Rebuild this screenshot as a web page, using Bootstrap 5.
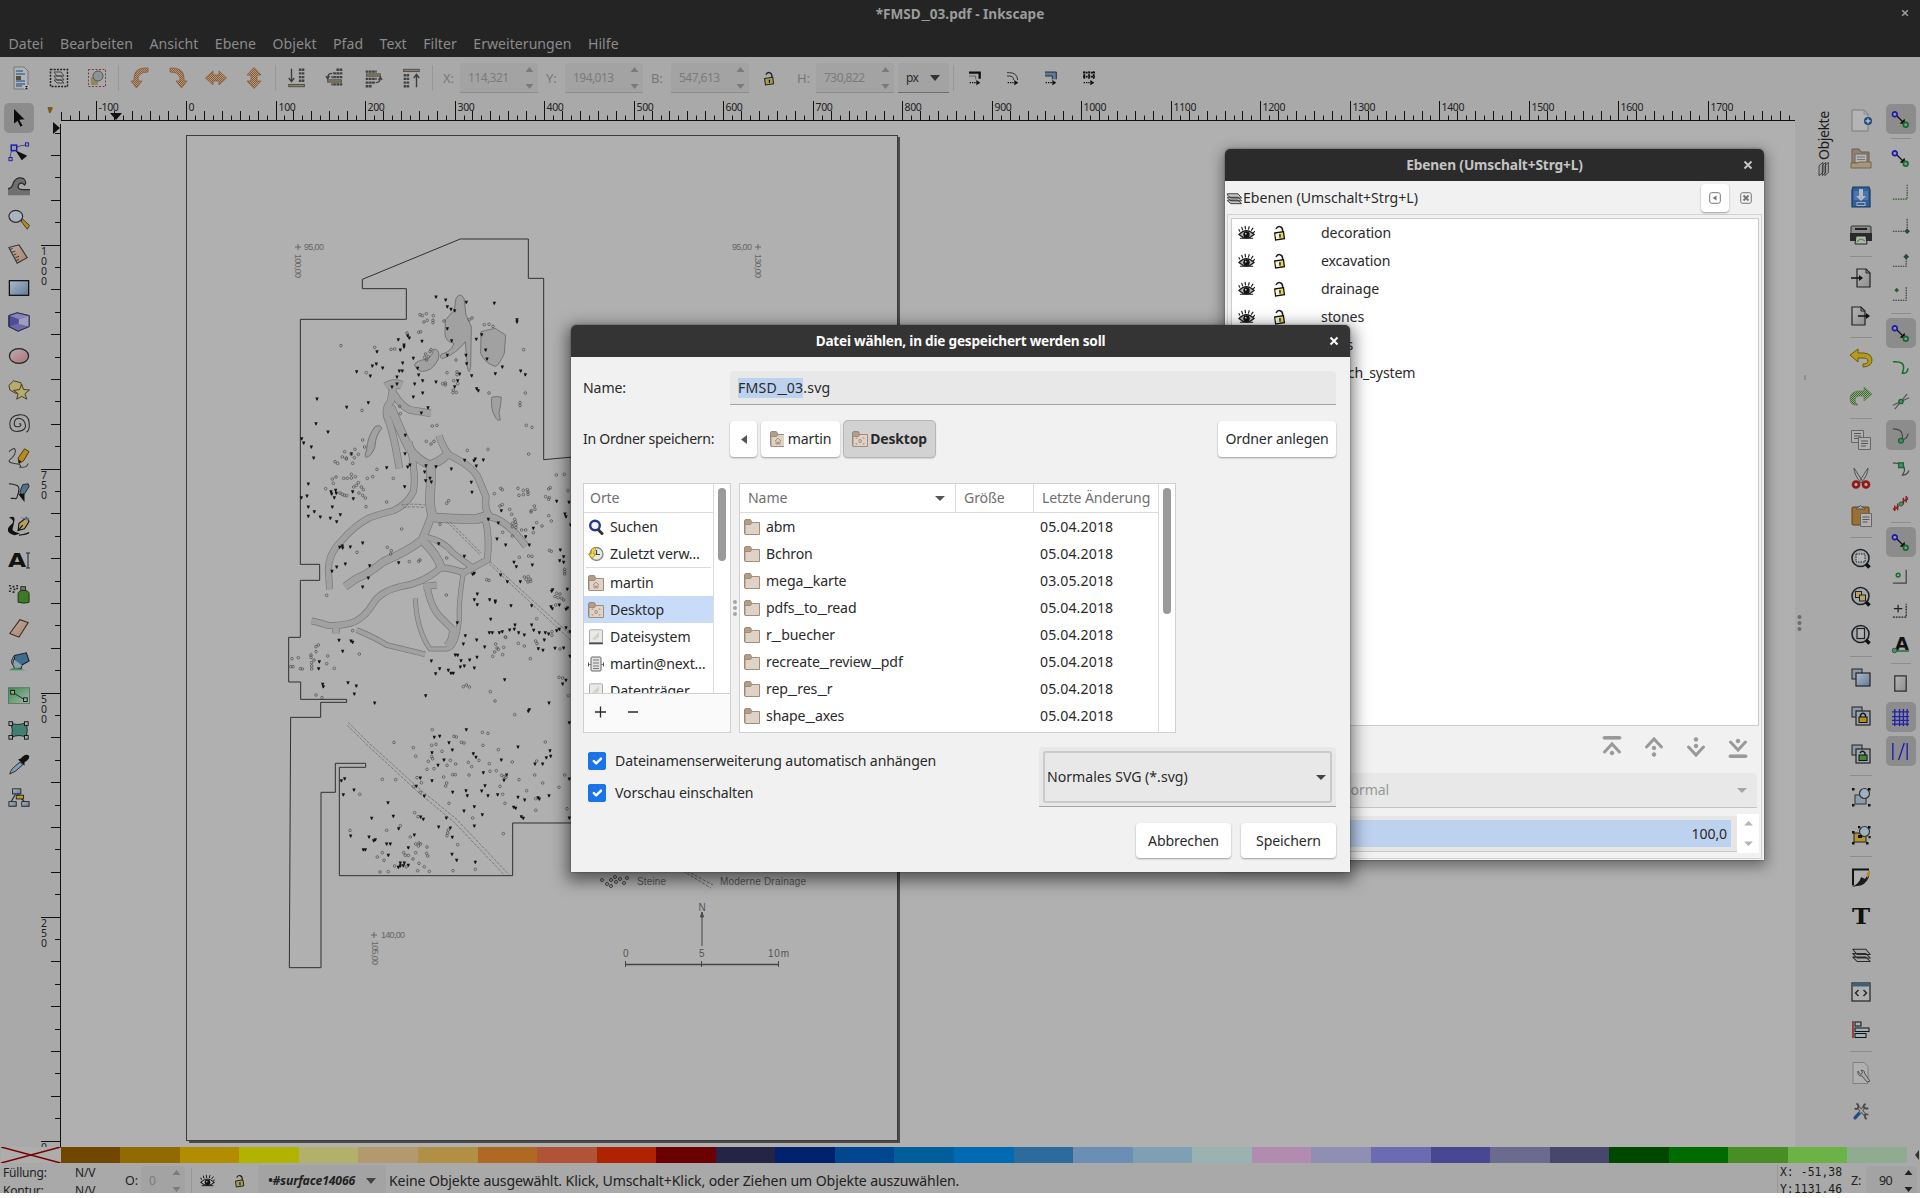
<!DOCTYPE html>
<html lang="de">
<head>
<meta charset="utf-8">
<title>*FMSD_03.pdf - Inkscape</title>
<link href="https://cdn.jsdelivr.net/npm/bootstrap@5.3.0/dist/css/bootstrap.min.css" rel="stylesheet">
<style>
body{font-family:"Noto Sans","Open Sans",sans-serif;font-size:14.1px;letter-spacing:-.12px;line-height:20px;color:#2a2a2a;width:1920px;height:1198px;overflow:hidden;background:#fff;position:relative}
.app{height:1193px;background:#a9a9a9;overflow:hidden;color:#222}
.titleb{height:28px;background:#242424;color:#9b9b9b;font-weight:700;font-size:13.6px;letter-spacing:0;position:relative}
.menub{height:29px;background:#242424;gap:16.5px;padding:0 8px 0 8.5px;letter-spacing:.02px}
.menub .nav-link{color:#8b8b8b;padding:0;line-height:31px}
.tools{height:42px;padding-left:2px}
.tools svg,.cmds svg,.snaps svg,.tbox svg{display:block;flex:none}
.cell{width:38px;display:flex;justify-content:center;flex:none}
.vsep{width:5px;height:26px;flex:none;background:linear-gradient(#979797,#979797) center/1px 100% no-repeat}
.tl{color:#777;padding-left:8px;flex:none;font-size:13px}
.spin{background:#a3a3a3;border-bottom:1px solid #8c8c8c;border-radius:4px 4px 0 0;height:30px;width:78px;padding:0 4px 0 8px;color:#7b7b7b;font-size:12px;letter-spacing:-.55px;flex:none}
.arr{width:9px;height:24px;flex:none}
.work{height:1048px;flex:none}
.tbox{width:38px;padding-top:2px}
.tbox>div,.snaps>div{height:34px;display:flex;align-items:center;justify-content:center}
.tbox .on>span,.snaps .on>span{background:#8c8c8c;border-radius:5px;width:30px;height:30px;display:flex;align-items:center;justify-content:center}
.canvas{width:1757px;height:1048px;flex:none}
.dock{width:46px;flex:none;position:relative}
.cmds{width:40px;padding-top:3px}
.cmds>div{height:38px;display:flex;align-items:center;justify-content:center}
.cmds>hr,.snaps>hr{height:1px;margin:2px auto;width:22px;border:0;background:#8d8d8d;opacity:1}
.snaps{width:39px;padding-top:3px}
.snaps>hr{width:20px}
.pal{height:16px;padding:0 13px 0 1px;flex:none}
.pal>i{flex:1 1 0}
.stat{height:30px;position:relative;flex:none}
.mono{font-family:"DejaVu Sans Mono",monospace;font-size:11.4px;letter-spacing:0}
.win{position:absolute;background:#f1f1f1;border-radius:5px 5px 0 0;box-shadow:0 4px 14px 2px rgba(0,0,0,.42),0 0 2px rgba(0,0,0,.5)}
.layers{left:1225px;top:149px;width:539px;height:711px;background:#f1f1f1}
.save{left:571px;top:325px;width:779px;height:547px;box-shadow:0 5px 16px 4px rgba(0,0,0,.5),0 0 2px rgba(0,0,0,.5)}
.wbar{height:32px;background:#2b2b2b;border-radius:5px 5px 0 0;color:#c4c4c4;font-weight:700;font-size:13.7px;position:relative}
.save .wbar{background:#343434;color:#fafafa;font-size:13.6px;letter-spacing:-.22px}
.wx{position:absolute;right:11px;top:50%;margin-top:-5px}
.gbtn{background:#fff;border:0;border-radius:4px;box-shadow:0 1px 2px rgba(0,0,0,.35);padding:0;letter-spacing:inherit;white-space:nowrap;font-size:14.1px;color:#2a2a2a;height:36px;display:flex;align-items:center;justify-content:center}
.gbtn.down{background:#d2d2d2;font-weight:700;font-size:13.9px;box-shadow:0 0 0 1px #b5b5b5,0 1px 2px rgba(0,0,0,.4)}
.frame{border:1px solid #d0d0d0;background:#fff}
.entry{background:#e8e8e8;border:0;border-bottom:1px solid #a3a3a3;border-radius:4px 4px 0 0;height:34px;line-height:20px}
.sel{background:#bdd2ef}
.us{display:inline-block;transform:scaleX(1.5);margin:0 1.7px}
.hd{color:#6f6f6f;height:29px;border-bottom:1px solid #dcdcdc}
.rw{height:27px;display:flex;align-items:center;white-space:nowrap}
.rw svg{flex:none}
.date{letter-spacing:.12px}
.lrow{height:28px;display:flex;align-items:center}
.thumbv{background:#9a9a9a;border-radius:4px;width:8px}
.chk.form-check-input{width:18px;height:18px;margin:0;border-radius:2px;background-color:#1a73e8;border-color:#1a73e8;flex:none;float:none}
.list{height:508px;margin:3px 2px 0 3px;border:1px solid #ccc;background:#fff}
.dim{opacity:.8}
</style>
<script src="https://cdn.jsdelivr.net/npm/bootstrap@5.3.0/dist/js/bootstrap.bundle.min.js"></script>
</head>
<body>
<svg width="0" height="0" class="position-absolute">
<defs>
<pattern id="chko" width="2" height="2" patternUnits="userSpaceOnUse"><rect width="2" height="2" fill="#b09a88"/><rect width="1" height="1" fill="#8a5a30"/><rect x="1" y="1" width="1" height="1" fill="#8a5a30"/></pattern>
<pattern id="chkg" width="2" height="2" patternUnits="userSpaceOnUse"><rect width="2" height="2" fill="#96a88c"/><rect width="1" height="1" fill="#3d6a2a"/><rect x="1" y="1" width="1" height="1" fill="#3d6a2a"/></pattern>
<linearGradient id="gb" x2="1" y2="1"><stop stop-color="#aebbc8"/><stop offset="1" stop-color="#5f7b98"/></linearGradient>
<linearGradient id="gk" x2="1" y2="1"><stop stop-color="#b8aeb0"/><stop offset="1" stop-color="#b07078"/></linearGradient>
<linearGradient id="go" x2="1" y2="1"><stop stop-color="#b8aca6"/><stop offset="1" stop-color="#b08066"/></linearGradient>
<linearGradient id="gw" x2="1" y2="1"><stop stop-color="#b4b4b4"/><stop offset="1" stop-color="#8f8f8f"/></linearGradient>
<linearGradient id="gg" x2="1" y2="1"><stop stop-color="#3a8a50"/><stop offset="1" stop-color="#a9b8ac"/></linearGradient>

<symbol id="s-spin" viewBox="0 0 9 24"><path d="M0.5 6 4.500 1l4 5zM.5 18l4 5 4-5z" fill="currentColor"/></symbol>
<symbol id="s-x" viewBox="0 0 10 10"><path d="M1.500 1.500l7 7M8.500 1.500l-7 7" stroke="currentColor" stroke-width="2"/></symbol>
<symbol id="s-eye" viewBox="0 0 18 18"><path d="M1 10q8-8 16 0-8 7.500-16 0z" fill="#bbb" stroke="#1c1c1c" stroke-width="1.300"/><circle cx="9" cy="10" r="3.400" fill="#111"/><circle cx="8.200" cy="9.200" r=".9" fill="#ccc"/><path d="M2 7 .8 4.500M5 5.500 3.800 2M8 4.700 7.500 1M11 5l1-3.700M14 6l2-3M16 8.500l1.800-2M2 14h14" stroke="#1c1c1c" stroke-width="1.200" fill="none"/></symbol>
<symbol id="s-unlock" viewBox="0 0 16 18"><path d="M3.500 4.500Q5 1 8 1.800T11 6v3" fill="none" stroke="#222" stroke-width="1.800"/><path d="M2 9l10-1.500 1 8L3 17z" fill="#e6d46a" stroke="#111" stroke-width="1.500"/><path d="M2.800 10l4-.6.8 6-4 .8z" fill="#f7f3d8"/><path d="M7 10.500h1.800l-.2 4H7.400z" fill="#111"/></symbol>
<symbol id="s-unlockd" viewBox="0 0 16 18"><path d="M3.500 4.500Q5 1 8 1.800T11 6v3" fill="none" stroke="#222" stroke-width="1.600"/><path d="M2 9l10-1.500 1 8L3 17z" fill="#a99c52" stroke="#222" stroke-width="1.300"/><path d="M7 10.500h1.800l-.2 4H7.400z" fill="#111"/></symbol>
<symbol id="s-layers" viewBox="0 0 24 24"><g fill="#c4c4c4" stroke="#333" stroke-width="1.300" stroke-linejoin="round"><path d="M2 16l5 4h15l-5-5H2zM2 12l5 4h15l-5-5H2zM2 8l5 4h15l-5-6H2z"/></g></symbol>
<symbol id="s-layersd" viewBox="0 0 24 24"><g fill="#a6a6a6" stroke="#2a2a2a" stroke-width="1.200" stroke-linejoin="round"><path d="M2 15l5 5h15l-5-5zM2 11l5 5h15l-5-5zM2 6l5 6h15l-5-6z"/></g></symbol>

<symbol id="t-arrow" viewBox="0 0 24 24"><path d="M6 1l13 13-6 .3 3.500 6.200-3.200 1.600-3-6.400L6 19z" fill="#0b0b0b" stroke="#a5a5a5" stroke-width=".8"/></symbol>
<symbol id="t-node" viewBox="0 0 24 24"><path d="M2 20Q1 5 22 4" fill="none" stroke="#444"/><path d="M8 10l13 6-6 5z" fill="#111"/><g fill="#9a9ab4" stroke="#1b1bb4"><rect x="1" y="18" width="3.500" height="3.500"/><rect x="19" y="2" width="3.500" height="3.500"/><rect x="3.500" y="4.500" width="6" height="6" stroke-width="1.600"/></g></symbol>
<symbol id="t-tweak" viewBox="0 0 24 24"><path d="M0 15Q5 14 6 8 10 1 17 4q4 4 1 7-3-4-6-1-3 5 3 6h9v6H0z" fill="#707070"/><path d="M0 15Q5 14 6 8 10 1 17 4q4 4 1 7-3-4-6-1-3 5 3 6h9" fill="none" stroke="#2c2c2c" stroke-width="1.400"/></symbol>
<symbol id="t-zoom" viewBox="0 0 24 24"><ellipse cx="8.500" cy="8" rx="7.500" ry="6.500" fill="#a9b4be" stroke="#2f2f2f" stroke-width="1.300"/><path d="M14 13l2.500-1.500 7 6.500-2.500 4z" fill="#b98d1c" stroke="#333"/></symbol>
<symbol id="t-ruler" viewBox="0 0 24 24"><path d="M1 5l11-3 9 14-11 6z" fill="url(#go)" stroke="#333" stroke-width="1.200"/><path d="M2 7l3-1M4 10l4-1M6 13l3-1M8 16l4-1.500M9 19l3-1" stroke="#333"/></symbol>
<symbol id="t-rect" viewBox="0 0 24 24"><rect x="1.500" y="4" width="21" height="16" fill="url(#gb)" stroke="#111" stroke-width="1.400"/></symbol>
<symbol id="t-cube" viewBox="0 0 24 24"><path d="M1 5l9-3 13 3v12l-12 5L1 17z" fill="#4e4e92" stroke="#25254f"/><path d="M1 5l9-3 13 3-11 4z" fill="#8585b4"/><path d="M12 9l11-4v12l-12 5z" fill="#9d9dbd"/><path d="M1 17l10-3 12 3-12 5z" fill="#6a6aa4"/><path d="M1 5l9-3 13 3v12l-12 5L1 17z" fill="none" stroke="#25254f"/></symbol>
<symbol id="t-ell" viewBox="0 0 24 24"><ellipse cx="12" cy="12" rx="10.500" ry="8" fill="url(#gk)" stroke="#222" stroke-width="1.300"/></symbol>
<symbol id="t-star" viewBox="0 0 24 24"><g fill="#b5ac6e" stroke="#3a3620"><path d="M1 7l5-5 8 2 1 6-6 6-7-4z"/><path d="M15 6l2 5.500 6.500.5-5 4 2 6-5.500-3-5.500 3 1.500-6-5-3.500 6.500-1z"/></g></symbol>
<symbol id="t-spiral" viewBox="0 0 24 24"><path d="M12 12q2-1 2 1t-4 2-3-5 6-4 6 7-8 7T2 12 12 2t11 8-3 11" fill="none" stroke="#2e2e2e" stroke-width="1.200"/></symbol>
<symbol id="t-pencil" viewBox="0 0 24 24"><path d="M1 5q7-6 7-1t-5 9 4 5 6 4q8 1 9-4" fill="none" stroke="#3d3d3d" stroke-width="1.200"/><path d="M12 18l-1-6 7-10 5 3-6 10z" fill="#b98a1a" stroke="#443208"/><path d="M12 18l-.5-4 3 1.500z" fill="#111"/></symbol>
<symbol id="t-pen" viewBox="0 0 24 24"><path d="M1 3q5 0 9 2t0 12q0 3-3 2H3" fill="none" stroke="#222" stroke-width="1.200"/><path d="M13 12l3-8 6-1 1 3-5 8-4 1z" fill="#54718e" stroke="#222"/><path d="M13 15l4 0 0 5z" fill="#111" stroke="#111" stroke-width="2"/></symbol>
<symbol id="t-call" viewBox="0 0 24 24"><path d="M1 3q7-3 6 3t-2 9 8 5q-6 4-11 0t1-9-2-8z" fill="#111"/><path d="M11 17l1-8 8-6 3 4-5 8z" fill="#b9a05a" stroke="#111" stroke-width="1.200"/><path d="M13 3h10v3z" fill="#536f92"/><path d="M11 17l5-6M12 22q8-1 11-3" stroke="#111" stroke-width="1.300" fill="none"/></symbol>
<symbol id="t-spray" viewBox="0 0 24 24"><path d="M11 12q0-4 6-4t6 4v9q-5 2-12 0z" fill="#3c7a26" stroke="#1c2e14"/><rect x="14" y="4" width="5" height="4" fill="#777" stroke="#222"/><path d="M1 3h2M5 4h2M9 3h2M2 6h2M6 7h2M1 9h2M5 10h2M9 6h2" stroke="#222" stroke-width="1.800"/></symbol>
<symbol id="t-eraser" viewBox="0 0 24 24"><path d="M2 18L13 3l9 3-10 16z" fill="url(#go)" stroke="#3a2a22" stroke-width="1.200"/></symbol>
<symbol id="t-bucket" viewBox="0 0 24 24"><path d="M7 5l13-3 3 9-11 6-5-2z" fill="#3f6d8e" stroke="#15242f" stroke-width="1.200"/><path d="M7 5q-5 6-2 10M6 9q-2 6 1 10h8q-2-2 1-3" fill="#8fa0ae" stroke="#222"/><path d="M1 21q5-4 11-2t11 2z" fill="#3f8f5c"/></symbol>
<symbol id="t-grad" viewBox="0 0 24 24"><rect x=".5" y="3" width="23" height="17" fill="url(#gg)" stroke="#4c7a58"/><path d="M5 8l13 8" stroke="#222"/><rect x="3" y="6" width="4" height="4" fill="#a9a9a9" stroke="#111"/><rect x="17" y="14" width="4" height="4" fill="#a9a9a9" stroke="#111"/></symbol>
<symbol id="t-mesh" viewBox="0 0 24 24"><path d="M3 4q6 4 17 0 2 8 0 16-8-4-16 0 2-8-1-16z" fill="#3f7f74" stroke="#222"/><g fill="#aaa" stroke="#111"><rect x="1" y="3" width="4" height="4"/><rect x="18" y="3" width="4" height="4"/><rect x="1" y="18" width="4" height="4"/><rect x="18" y="18" width="4" height="4"/></g></symbol>
<symbol id="t-drop" viewBox="0 0 24 24"><path d="M2 23q0-5 11-13l3 3Q8 21 2 23z" fill="#7f9fb8" stroke="#222"/><path d="M11 7l3-1q5-6 9-3 1 4-5 7v4z" fill="#111"/></symbol>
<symbol id="t-conn" viewBox="0 0 24 24"><path d="M8 8L3 17M10 8l9 9M12 13v-5" stroke="#222" stroke-width="1.200"/><rect x="5" y="2" width="9" height="5.500" fill="url(#gb)" stroke="#222"/><rect x="9" y="9" width="8" height="4" fill="#c39a25" stroke="#222"/><rect x="1" y="16" width="8" height="5" fill="url(#gb)" stroke="#222"/><rect x="15" y="16" width="8" height="5" fill="url(#gb)" stroke="#222"/></symbol>

<symbol id="b-selall" viewBox="0 0 24 24"><path d="M5 1h10l4 4v18H5z" fill="#aeb4ba" stroke="#777"/><path d="M7 5h7M7 8h9M7 15h9M7 18h9M7 20h6" stroke="#4b6b92" stroke-width="1.300"/><rect x="7" y="10" width="5" height="4" fill="#54503a"/><path d="M15 19h5v4h-5z" fill="#bbb"/><path d="M16 20h3l-1.500 1.500L19 23h-3l1.500-1.500z" fill="#111"/></symbol>
<symbol id="b-selal" viewBox="0 0 24 24"><rect x="3.500" y="3.500" width="17" height="17" fill="none" stroke="#222" stroke-width="1.500" stroke-dasharray="2 1.200"/><path d="M7 14l3 3h7l-3-3zM7 10l3 4h7l-3-4zM7 6l3 4h7l-3-4z" fill="#aaa" stroke="#444"/></symbol>
<symbol id="b-desel" viewBox="0 0 24 24"><rect x="3.500" y="3.500" width="17" height="17" fill="none" stroke="#8b3a3a" stroke-dasharray="2 1.500"/><path d="M6 11h7v8H6z" fill="#8d8a58"/><circle cx="13" cy="10" r="5" fill="#8f9498" stroke="#555"/></symbol>
<symbol id="b-rotl" viewBox="0 0 24 24"><path d="M20 2q-14-1-14 10v3H3l5.500 7 5.500-7h-4q-1-9 10-9z" fill="url(#chko)" stroke="#8c5b36" stroke-width=".8"/></symbol>
<symbol id="b-flip" viewBox="0 0 24 24"><path d="M1.500 12L9 5v4h6V5l7.500 7-7.500 7v-4H9v4z" fill="url(#chko)" stroke="#8c5b36" stroke-width=".8"/></symbol>
<symbol id="b-low" viewBox="0 0 24 24"><path d="M6 2v13M3 12l3 4 3-4" fill="none" stroke="#222" stroke-width="1.500"/><path d="M20 3h-6M20 7h-6M20 11h-6M20 15h-6" fill="none" stroke="#2a2a2a" stroke-width="2.600" stroke-dasharray="3 .5"/><rect x="3" y="19" width="17" height="2.500" fill="#8a7a50" stroke="#333"/></symbol>
<symbol id="b-low1" viewBox="0 0 24 24"><path d="M20 3h-7M20 7H10M20 11H8M20 19H8" stroke="#2a2a2a" stroke-width="2.600" stroke-dasharray="3 .5"/><rect x="4" y="14" width="15" height="2.500" fill="#8a7a50" stroke="#333"/><path d="M9 7q-5 0-5 5M2 10l2 3 2-3" fill="none" stroke="#222" stroke-width="1.300"/></symbol>
<symbol id="b-offs" viewBox="0 0 24 24"><path d="M3 4h16v9" fill="none" stroke="#111" stroke-width="3.500"/><path d="M3 9h10v5" fill="none" stroke="#444"/><path d="M4 19h10" stroke="#111" stroke-width="1.800" stroke-dasharray="2 1.500"/><path d="M14 15l6 4-6 4z" fill="#111"/></symbol>
<symbol id="b-curv" viewBox="0 0 24 24"><path d="M3 4h4q11 0 12 11M3 9h3q7 0 7 6" fill="none" stroke="#333" stroke-width="1.500"/><path d="M4 19h10" stroke="#111" stroke-width="1.800" stroke-dasharray="2 1.500"/><path d="M14 15l6 4-6 4z" fill="#111"/></symbol>
<symbol id="b-offb" viewBox="0 0 24 24"><path d="M3 3h17v11h-6V9H3z" fill="#5b7b9c"/><path d="M3 3h17v11M3 9h11v5" fill="none" stroke="#222" stroke-width="1.300"/><path d="M4 19h10" stroke="#111" stroke-width="1.800" stroke-dasharray="2 1.500"/><path d="M14 15l6 4-6 4z" fill="#111"/></symbol>
<symbol id="b-patt" viewBox="0 0 24 24"><path d="M3 4h18M3 10h18M5 2v11M12 2v11M19 2v11" stroke="#111" stroke-width="2.400" stroke-dasharray="3 1"/><path d="M4 19h10" stroke="#111" stroke-width="1.800" stroke-dasharray="2 1.500"/><path d="M14 15l6 4-6 4z" fill="#111"/></symbol>

<symbol id="c-new" viewBox="0 0 24 24"><path d="M3 1h12l4 4v17H3z" fill="#b4b4b4" stroke="#7c7c7c"/><path d="M15 1v4h4" fill="none" stroke="#888"/><circle cx="19" cy="12" r="4" fill="#1e4a80"/><path d="M19 9.500v5M16.500 12h5" stroke="#b7c3d2" stroke-width="1.400"/></symbol>
<symbol id="c-open" viewBox="0 0 24 24"><path d="M3 2h7l2 3h8v12H3z" fill="#94836f" stroke="#6d5c48"/><rect x="6" y="7" width="12" height="9" fill="#b5b5b5" stroke="#666"/><path d="M8 10h8M8 12.500h8" stroke="#777"/><path d="M2 16h7l1-1h12v6H2z" fill="#a8957d" stroke="#75634e"/></symbol>
<symbol id="c-save" viewBox="0 0 24 24"><path d="M4 2h16l1 3v17H3V5z" fill="#315f9c" stroke="#173863" stroke-width="1.200"/><path d="M5 6h14v9H5z" fill="#4a76b0"/><path d="M10 4h4v7h3l-5 5-5-5h3z" fill="#b5b9bd"/><rect x="8" y="17.500" width="8" height="3" fill="none" stroke="#a8b2be"/></symbol>
<symbol id="c-print" viewBox="0 0 24 24"><rect x="2" y="3" width="20" height="8" rx="1" fill="#8c8c8c" stroke="#333"/><path d="M6 6h12" stroke="#222" stroke-width="2"/><path d="M1 10h22v8H1z" fill="#2a2a2a"/><path d="M7 13h10l1 8H6z" fill="#b4b4b4" stroke="#222"/><path d="M8 19q3-5 8-1" stroke="#5b9a40" stroke-width="1.500" fill="none"/></symbol>
<symbol id="c-imp" viewBox="0 0 24 24"><path d="M8 3h9l4 4v14H8z" fill="url(#gw)" stroke="#222" stroke-width="1.200"/><path d="M17 3v4h4" fill="none" stroke="#222"/><path d="M2 12h8" stroke="#111" stroke-width="1.500"/><path d="M10 9l4 3-4 3z" fill="#111"/></symbol>
<symbol id="c-exp" viewBox="0 0 24 24"><path d="M3 3h9l4 4v14H3z" fill="url(#gw)" stroke="#222" stroke-width="1.200"/><path d="M12 3v4h4" fill="none" stroke="#222"/><path d="M9 12h8" stroke="#111" stroke-width="1.500"/><path d="M17 9l4 3-4 3z" fill="#111"/></symbol>
<symbol id="c-undo" viewBox="0 0 24 24"><path d="M1 8l8-6v4h6q8 1 8 7t-8 7h-1v-3q5 0 5-3t-5-3H9v4z" fill="#b49a22" stroke="#6b5a08"/></symbol>
<symbol id="c-redo" viewBox="0 0 24 24"><path d="M23 9l-8-7v4H9q-8 1-8 8 0 5 4 6h4q-3-2-3-5 0-4 4-4h5v5z" fill="url(#chkg)" stroke="#5f8050" stroke-width=".7"/></symbol>
<symbol id="c-copy" viewBox="0 0 24 24"><g fill="#b0b0b0" stroke="#666"><path d="M2.500 2.500h12v12h-12z"/><path d="M9.500 9.500h12v12h-12z"/></g><path d="M5 5.500h7M5 8h7M5 10.500h4M12 13h7M12 15.500h7M12 18h5" stroke="#555"/></symbol>
<symbol id="c-cut" viewBox="0 0 24 24"><path d="M5 2l9 14-2 1Q5 9 5 2zM19 2l-9 14 2 1q7-8 7-15z" fill="#aaa" stroke="#555"/><g fill="none" stroke="#951414" stroke-width="2.600"><circle cx="7" cy="18.500" r="3"/><circle cx="17" cy="18.500" r="3"/></g></symbol>
<symbol id="c-paste" viewBox="0 0 24 24"><rect x="3" y="3" width="17" height="18" rx="1" fill="#9a7134" stroke="#5c421a"/><path d="M7 5q0-2 3-2 1.500-3 3 0 3 0 3 2z" fill="#aaa" stroke="#555"/><path d="M11.500 9.500h11v13h-11z" fill="#b2b2b2" stroke="#666"/><path d="M13.500 13h7M13.500 15.500h7M13.500 18h5" stroke="#555"/></symbol>
<symbol id="c-zsel" viewBox="0 0 24 24"><circle cx="11.500" cy="11" r="8.500" fill="#a2a9b0" stroke="#222" stroke-width="1.600"/><path d="M17 17l3.500 3.500" stroke="#111" stroke-width="3.500"/><rect x="7" y="7" width="9" height="8" fill="#b6b6b6" stroke="#222" stroke-dasharray="1.500 1"/></symbol>
<symbol id="c-zdraw" viewBox="0 0 24 24"><circle cx="11.500" cy="11" r="8.500" fill="#a2a9b0" stroke="#222" stroke-width="1.600"/><path d="M17 17l3.500 3.500" stroke="#111" stroke-width="3.500"/><g fill="#b8a468" stroke="#222"><rect x="6.500" y="6.500" width="6" height="6"/><rect x="10.500" y="10" width="6" height="6"/></g></symbol>
<symbol id="c-zpage" viewBox="0 0 24 24"><circle cx="11.500" cy="11" r="8.500" fill="#a2a9b0" stroke="#222" stroke-width="1.600"/><path d="M17 17l3.500 3.500" stroke="#111" stroke-width="3.500"/><rect x="8" y="5.500" width="7.500" height="10" fill="#b0b0b0" stroke="#222" stroke-width="1.200"/></symbol>
<symbol id="c-dup" viewBox="0 0 24 24"><rect x="3" y="3" width="10" height="10" fill="#8b99a6" stroke="#222"/><rect x="7" y="7" width="14" height="13" fill="url(#gb)" stroke="#222" stroke-width="1.200"/></symbol>
<symbol id="c-clone" viewBox="0 0 24 24"><rect x="3" y="3" width="10" height="10" fill="#8b99a6" stroke="#222"/><rect x="7" y="7" width="14" height="14" fill="#9aa6b1" stroke="#222" stroke-width="1.200"/><path d="M11.500 13v-2q2.500-3.500 5 0v2" fill="none" stroke="#111" stroke-width="1.400"/><rect x="10" y="13" width="8" height="5.500" fill="#b98d1e" stroke="#111"/></symbol>
<symbol id="c-unl" viewBox="0 0 24 24"><rect x="3" y="3" width="10" height="10" fill="#8b99a6" stroke="#222"/><rect x="7" y="7" width="14" height="14" fill="#9aa6b1" stroke="#222" stroke-width="1.200"/><path d="M11 11q2.500-3.500 5 0v2" fill="none" stroke="#111" stroke-width="1.400"/><rect x="10" y="13" width="8" height="5.500" fill="#4a8430" stroke="#111"/></symbol>
<symbol id="c-grp" viewBox="0 0 24 24"><rect x="6" y="10" width="11" height="9" fill="#8c9dae" stroke="#333"/><circle cx="15.500" cy="8.500" r="5" fill="#9fb0c0" stroke="#333" stroke-width="1.200"/><path d="M3 3h2.500v2.500H3zM19 3h2.500v2.500H19zM3 19h2.500v2.500H3zM19 19h2.500v2.500H19z" fill="#111"/></symbol>
<symbol id="c-ungrp" viewBox="0 0 24 24"><rect x="5" y="10" width="12" height="9" fill="#b39332" stroke="#222"/><circle cx="15.500" cy="8.500" r="5" fill="#9fb0c0" stroke="#333" stroke-width="1.200"/><path d="M9 3h2.200v2.200H9zM19 3h2.500v2.500H19zM3 8h2.500v2.500H3zM3 19h2.500v2.500H3zM17 19h2.500v2.500H17zM19.500 13h2.200v2.200h-2.200zM9 12h4v3H9z" fill="#111"/></symbol>
<symbol id="c-fill" viewBox="0 0 24 24"><path d="M3 3h18L3 21z" fill="#b0b0b0"/><path d="M20 3.500H4v16" fill="none" stroke="#111" stroke-width="2"/><path d="M3 21q8-4 9-10l4 2 4-6v4q-4 9-12 9z" fill="#1b1b1b"/><path d="M18 7l3-3v5l-3 3z" fill="#b98a1a"/></symbol>
<symbol id="c-xml" viewBox="0 0 24 24"><rect x="3" y="3" width="18" height="18" fill="#b0b0b0" stroke="#222" stroke-width="1.200"/><rect x="3.500" y="3.500" width="17" height="3" fill="#3d5f80"/><path d="M9.500 10L6.500 13l3 3M14.500 10l3 3-3 3" fill="none" stroke="#222" stroke-width="1.400"/></symbol>
<symbol id="c-align" viewBox="0 0 24 24"><path d="M4 3v17" stroke="#8d1717" stroke-width="1.400"/><g fill="#9fb0c0" stroke="#111"><rect x="6" y="4" width="6" height="4"/><rect x="6" y="10" width="14" height="3.500"/><rect x="6" y="15.500" width="11" height="4"/></g></symbol>
<symbol id="c-prop" viewBox="0 0 24 24"><path d="M4 1.500h11l4 4v17H4z" fill="#b0b0b0" stroke="#808080"/><path d="M9 10q-1 5 4 5l5 6 3-1-5-7q0-4-4-4l1.500 3-2 1.500z" fill="#aaa" stroke="#555"/></symbol>
<symbol id="c-pref" viewBox="0 0 24 24"><path d="M9 8l8 9M16 7l-7 9" stroke="#4a4a4a" stroke-width="3.400"/><path d="M9 8l8 9M16 7l-7 9" stroke="#a6a6a6" stroke-width="1.600"/><path d="M5 9q3 2 4-1T7 4M20 9q-4 1-5-1t2-4M20 16q-4-1-4 1t2 4" fill="none" stroke="#4a4a4a" stroke-width="2"/><path d="M9.500 15l-4 4.500" stroke="#234c86" stroke-width="3.600" stroke-linecap="round"/></symbol>

<symbol id="n-main" viewBox="0 0 20 20"><path d="M6 6l7 7" stroke="#111" stroke-width="1.400"/><path d="M14 10v4h-4z" fill="#111" stroke="#111"/><circle cx="4" cy="4.500" r="2.500" fill="#999" stroke="#1616b8" stroke-width="1.700"/><circle cx="15.500" cy="15.500" r="2.500" fill="#7d8fae" stroke="#156e22" stroke-width="1.700"/></symbol>
<symbol id="n-b1" viewBox="0 0 20 20"><path d="M2 17h15V1" fill="none" stroke="#2d5a2d" stroke-width="1.200" stroke-dasharray="1.600 1"/></symbol>
<symbol id="n-b2" viewBox="0 0 20 20"><path d="M2 15h15V1" fill="none" stroke="#333" stroke-width="1.200" stroke-dasharray="1.600 1"/><path d="M17 12l3 3-3 3-3-3z" fill="#2d4a36"/></symbol>
<symbol id="n-b3" viewBox="0 0 20 20"><path d="M2 16h14V4" fill="none" stroke="#333" stroke-width="1.200" stroke-dasharray="1.600 1"/><path d="M16 3l3 3-3 3-3-3z" fill="#2d4a36"/></symbol>
<symbol id="n-b4" viewBox="0 0 20 20"><path d="M2 16h14V2" fill="none" stroke="#333" stroke-width="1.200" stroke-dasharray="1.600 1"/><path d="M6 3l2.500 2.500L6 8 3.500 5.500z" fill="#2d5a36"/></symbol>
<symbol id="n-path" viewBox="0 0 20 20"><path d="M2 4q13-1 11 8l-1 4q5 1 6-5" fill="none" stroke="#176f25" stroke-width="1.600"/></symbol>
<symbol id="n-int" viewBox="0 0 20 20"><path d="M2 14L19 6M4 18L17 2" stroke="#555" stroke-width="1.200"/><circle cx="10.500" cy="10" r="2.300" fill="#5d7d90" stroke="#156e22" stroke-width="1.400"/></symbol>
<symbol id="n-cusp" viewBox="0 0 20 20"><path d="M2 3q10 0 10 7v4q5 0 6-6" fill="none" stroke="#444" stroke-width="1.200"/><circle cx="10.500" cy="15.500" r="2.500" fill="#5d7d90" stroke="#156e22" stroke-width="1.400"/></symbol>
<symbol id="n-smo" viewBox="0 0 20 20"><path d="M2 3l8 1q5 2 4 8l-2 4q5 0 7-5" fill="none" stroke="#444" stroke-width="1.200"/><rect x="8" y="3" width="5" height="5" fill="#5d7d90" stroke="#156e22" stroke-width="1.400"/></symbol>
<symbol id="n-mid" viewBox="0 0 20 20"><path d="M3 18L18 3" stroke="#555"/><path d="M4 12v6M7 10v7M2 16l6-3M13 4v7M16 2v7M12 8l6-3" stroke="#8d2020" stroke-width="1.500"/><circle cx="10.500" cy="10.500" r="2.200" fill="#5d7d90" stroke="#156e22"/></symbol>
<symbol id="n-obj" viewBox="0 0 20 20"><path d="M2 17h14V3" fill="none" stroke="#444" stroke-width="1.300"/><circle cx="7.500" cy="8.500" r="2" fill="#8aa" stroke="#156e22" stroke-width="1.500"/></symbol>
<symbol id="n-rot" viewBox="0 0 20 20"><path d="M2 17h14V3" fill="none" stroke="#222" stroke-width="1.300" stroke-dasharray="2 1"/><path d="M3 8h9M7.500 4v8" stroke="#222" stroke-width="1.300"/></symbol>
<symbol id="n-pg" viewBox="0 0 20 20"><rect x="4" y="2" width="12" height="16" fill="url(#gw)" stroke="#222" stroke-width="1.200"/></symbol>
<symbol id="n-grid" viewBox="0 0 20 20"><path d="M4 1v18M9 1v18M13 1v18M17 1v18M1 4h18M1 9h18M1 13h18M1 17h18" stroke="#2222a8" stroke-width="1.400"/></symbol>
<symbol id="n-guide" viewBox="0 0 20 20"><path d="M2 1v18M8 19L14 1M17 1v18" stroke="#1c1cb4" stroke-width="1.400"/></symbol>

<symbol id="f-dir" viewBox="0 0 16 16"><path d="M.5 14.500v-13l.8-.9h5l1 1.500v12.400z" fill="#b39e8a" stroke="#9b8571"/><path d="M1 15.500V5.500h5.500L8 3.500h7.500v12z" fill="#dfd3c8" stroke="#a28d7b"/></symbol>
<symbol id="f-home" viewBox="0 0 16 16"><use href="#f-dir"/><path d="M5 10l3-3 3 3M6 9.500V13h1.500v-2h1v2H10V9.500" fill="none" stroke="#a8927e"/></symbol>
<symbol id="f-desk" viewBox="0 0 16 16"><use href="#f-dir"/><path d="M4 8V7h1.500M10.500 7H12v1M12 12v1h-1.500M5.500 13H4v-1M7 8.500h1q1.500 0 1.500 1.500T8 11.500H7z" fill="none" stroke="#a8927e"/></symbol>
<symbol id="f-disk" viewBox="0 0 16 16"><rect x="1.500" y=".8" width="13" height="13" rx="1" fill="#e9e9e6" stroke="#aaa"/><path d="M4 10l7-7v5l-4 3z" fill="#d2d2cd"/><rect x="1" y="13.500" width="14" height="1.800" fill="#4c4c4c"/></symbol>
<symbol id="f-net" viewBox="0 0 16 16"><rect x="3" y="1" width="10" height="14" rx="1" fill="#e2e2e2" stroke="#666"/><path d="M5 4h6M5 7h6M5 10h6M5 12.500h6M.5 8.500H3M13 8.500h2.500" stroke="#777" stroke-width="1.200"/><path d="M.5 6.500v4M15.500 6.500v4" stroke="#555"/></symbol>
<symbol id="f-find" viewBox="0 0 16 16"><circle cx="7" cy="6.500" r="4.800" fill="#f4f6ff" stroke="#26388f" stroke-width="2.400"/><path d="M10.500 11l3.500 3.500" stroke="#333" stroke-width="3" stroke-linecap="round"/></symbol>
<symbol id="f-rec" viewBox="0 0 16 16"><circle cx="8.500" cy="8" r="6.500" fill="#e8e8e0" stroke="#8a8a82" stroke-width="1.400"/><path d="M8.500 4v4.500H12" fill="none" stroke="#444" stroke-width="1.200"/><path d="M7 1.500Q3 2 3 8H.5L4 12.500 8 8H5.500q0-3 2-4z" fill="#f3dc45" stroke="#9c8510" stroke-width=".8"/></symbol>
<symbol id="l-top" viewBox="0 0 20 24"><rect x="1" y="1.500" width="18" height="2.600" rx="1.300"/><path d="M2.500 17L10 9l7.500 8" fill="none" stroke-width="3" stroke-linecap="round"/><circle cx="10" cy="18" r="1.800"/></symbol>
<symbol id="l-up" viewBox="0 0 20 24"><path d="M2.500 12L10 4l7.500 8" fill="none" stroke-width="3" stroke-linecap="round"/><circle cx="10" cy="13" r="1.800"/><circle cx="10" cy="19.500" r="1.800"/></symbol>
</defs>
</svg>

<div class="app d-flex flex-column">
 <header>
  <div class="titleb d-flex align-items-center justify-content-center"><span>*FMSD<span class="us">_</span>03.pdf - Inkscape</span><svg class="wx" width="8" height="8"><use href="#s-x"/></svg></div>
  <nav class="menub nav flex-nowrap">
   <a class="nav-link">Datei</a><a class="nav-link">Bearbeiten</a><a class="nav-link">Ansicht</a><a class="nav-link">Ebene</a><a class="nav-link">Objekt</a><a class="nav-link">Pfad</a><a class="nav-link">Text</a><a class="nav-link">Filter</a><a class="nav-link">Erweiterungen</a><a class="nav-link">Hilfe</a>
  </nav>
 </header>
 <div class="tools d-flex align-items-center">
  <div class="cell"><svg width="24" height="24"><use href="#b-selall"/></svg></div>
  <div class="cell"><svg width="24" height="24"><use href="#b-selal"/></svg></div>
  <div class="cell"><svg width="24" height="24"><use href="#b-desel"/></svg></div>
  <div class="vsep"></div>
  <div class="cell"><svg width="24" height="24"><use href="#b-rotl"/></svg></div>
  <div class="cell"><svg width="24" height="24" viewBox="0 0 24 24"><g transform="matrix(-1 0 0 1 24 0)"><use href="#b-rotl" width="24" height="24"/></g></svg></div>
  <div class="cell"><svg width="24" height="24"><use href="#b-flip"/></svg></div>
  <div class="cell"><svg width="24" height="24" viewBox="0 0 24 24"><g transform="rotate(90 12 12)"><use href="#b-flip" width="24" height="24"/></g></svg></div>
  <div class="vsep"></div>
  <div class="cell dim"><svg width="22" height="22"><use href="#b-low"/></svg></div>
  <div class="cell dim"><svg width="22" height="22"><use href="#b-low1"/></svg></div>
  <div class="cell dim"><svg width="22" height="22" viewBox="0 0 24 24"><g transform="rotate(180 12 12)"><use href="#b-low1" width="24" height="24"/></g></svg></div>
  <div class="cell dim"><svg width="22" height="22" viewBox="0 0 24 24"><g transform="rotate(180 12 12)"><use href="#b-low" width="24" height="24"/></g></svg></div>
  <div class="vsep"></div>
  <span class="tl" style="width:25px">X:</span><div class="spin d-flex align-items-center justify-content-between">114,321<svg class="arr"><use href="#s-spin"/></svg></div>
  <span class="tl" style="width:27px">Y:</span><div class="spin d-flex align-items-center justify-content-between">194,013<svg class="arr"><use href="#s-spin"/></svg></div>
  <span class="tl" style="width:28px">B:</span><div class="spin d-flex align-items-center justify-content-between">547,613<svg class="arr"><use href="#s-spin"/></svg></div>
  <div class="cell" style="width:40px"><svg width="13" height="15"><use href="#s-unlockd"/></svg></div>
  <span class="tl" style="width:27px">H:</span><div class="spin d-flex align-items-center justify-content-between">730,822<svg class="arr"><use href="#s-spin"/></svg></div>
  <div class="spin d-flex align-items-center justify-content-between ms-1" style="width:51px;color:#2a2a2a;padding-right:9px;border-color:#6e6e6e"><span>px</span><svg width="10" height="6"><path d="M0 0h10L5 6z" fill="#333"/></svg></div>
  <div class="vsep" style="margin-left:2px"></div>
  <div class="cell"><svg width="16" height="16"><use href="#b-offs"/></svg></div>
  <div class="cell"><svg width="16" height="16"><use href="#b-curv"/></svg></div>
  <div class="cell"><svg width="16" height="16"><use href="#b-offb"/></svg></div>
  <div class="cell"><svg width="16" height="16"><use href="#b-patt"/></svg></div>
 </div>
 <main class="work d-flex">
  <div class="tbox" id="tbox"></div>
  <svg class="canvas" viewBox="38 99 1757 1048" id="canvas">
   <rect x="61" y="121" width="1734" height="1026" fill="#b0b0b0"/>
   <rect x="897" y="137" width="3" height="1006" fill="#4a4a4a"/><rect x="189" y="1140" width="711" height="3" fill="#4a4a4a"/>
   <rect x="186.500" y="135.500" width="711" height="1005" fill="#b0b0b0" stroke="#3c3c3c"/>
   <g id="ruler" fill="#222" font-size="10.500"></g>
   <path d="M110 113h12l-6 7zM53 122v12l7-6z" fill="#111"/><path d="M47.500 107h5v2l-2 4h-1.500z" fill="#7d5b12"/>
   <g transform="translate(260 220) scale(.33333)">
    <path d="M940 711L851 719V175H805V57H601L307 178V206H439V298H121V1033H179V1081H121V1252H86V1386H122V1438H260V1447H182V1492H92L88 2243H183V1717H226V1630H317V1642H238V1967H758V1809H940" fill="none" stroke="#303030" stroke-width="3"/>
    <g id="ditch" fill="none" stroke-linejoin="round"></g>
    <g fill="#a1a1a1" stroke="#6a6a6a" stroke-width="2.500">
     <path d="M588 235Q600 215 612 235L618 285 634 320 632 440Q627 470 622 440L616 365Q590 400 550 415 535 415 545 402 575 395 582 370 555 365 555 340L556 300 583 270z"/>
     <path d="M663 335L705 325 737 345 733 400Q715 440 705 439 675 430 662 400z"/>
     <path d="M463 435Q470 420 500 418 520 405 520 388 535 385 537 405 535 430 510 448 485 460 472 448z"/>
     <path d="M695 532Q710 527 724 532 722 560 717 580L721 600Q710 605 703 585 693 570 695 532z"/>
     <path d="M345 620Q360 612 365 625 345 650 345 680 335 710 318 712 312 708 320 690 322 650 345 620z"/>
    </g>
    <g fill="none" stroke="#707070" stroke-width="2.500" stroke-dasharray="9 4"><path d="M265 1508L330 1572 480 1708 590 1798 748 1965M262 1516L325 1578 474 1716 582 1806 733 1965M570 905L665 1000M560 905L660 1004M690 1025L940 1252M688 1032L936 1264M425 855q30-5 70 0M430 863q30-5 65 0"/></g>
    <g id="dots"></g>
   </g>
   <g font-family="Liberation Sans,sans-serif" font-size="9" fill="#666" letter-spacing="0">
    <path d="M295 247h6M298 244v6M371 935h6M374 932v6M755 247h6M758 244v6" stroke="#666"/>
    <text x="304" y="250" textLength="20">95,00</text><text x="381" y="937.500" textLength="24">140,00</text><text x="732" y="250" textLength="20">95,00</text>
    <text transform="translate(295 254) rotate(90)" textLength="24">100,00</text><text transform="translate(372 941) rotate(90)" textLength="24">105,00</text><text transform="translate(755 254) rotate(90)" textLength="24">130,00</text>
    <g font-size="10" fill="#555"><text x="637" y="884.500" textLength="29">Steine</text><text x="720" y="884.500" textLength="86">Moderne Drainage</text><text x="698.500" y="910.500">N</text><text x="623" y="957">0</text><text x="699" y="957">5</text><text x="768" y="957" textLength="21">10m</text></g>
    <path d="M702 946V915M702 912l-1.500 5h3zM625.500 961v6M701.500 961v6M778.500 961v6" stroke="#444"/><path d="M625 964.500h154" stroke="#444" stroke-width="1.500"/>
    <path d="M683 871l28 17M687 871l26 14" stroke="#666" stroke-dasharray="3 1.500"/>
    <g fill="none" stroke="#444"><circle cx="602" cy="880" r="1.500"/><circle cx="607" cy="884" r="1.500"/><circle cx="611" cy="880" r="1.500"/><circle cx="615" cy="877" r="1.500"/><circle cx="616" cy="882" r="1.500"/><circle cx="620" cy="879" r="1.500"/><circle cx="624" cy="883" r="1.500"/><circle cx="627" cy="878" r="1.500"/><circle cx="611" cy="886" r="1.500"/></g>
   </g>
  </svg>
  <aside class="dock">
   <svg width="46" height="560"><g transform="translate(34 61) rotate(-90)"><text font-size="14.100" fill="#1c1c1c" textLength="49">Objekte</text></g><g transform="translate(20 78) rotate(-90)"><use href="#s-layersd" width="16" height="16"/></g><path d="M10 276v5" stroke="#777"/><g fill="#6d6d6d"><circle cx="4.500" cy="518" r="2"/><circle cx="4.500" cy="524" r="2"/><circle cx="4.500" cy="530" r="2"/></g></svg>
  </aside>
  <div class="cmds" id="cmds"></div>
  <div class="snaps" id="snaps"></div>
 </main>
 <div class="pal d-flex position-relative" id="pal"></div>
 <footer class="stat d-flex">
  <div style="width:121px;padding-left:3px;font-size:12px;line-height:18px;letter-spacing:-.2px;padding-top:1px" class="flex-shrink-0"><div class="d-flex"><span style="width:72px">Füllung:</span>N/V</div><div class="d-flex"><span style="width:72px">Kontur:</span>N/V</div></div>
  <div class="d-flex align-items-center flex-shrink-0" style="padding:6px 0 0 4px"><span style="font-size:12.500px;width:16px">O:</span><div class="spin d-flex align-items-center justify-content-between" style="width:44px">0<svg class="arr"><use href="#s-spin"/></svg></div><div class="vsep ms-1"></div></div>
  <div class="d-flex align-items-center flex-grow-1" style="padding-top:6px">
   <svg width="15" height="15" style="margin-left:6px"><use href="#s-eye"/></svg><svg width="12" height="14" style="margin-left:19px"><use href="#s-unlockd"/></svg>
   <div class="d-flex align-items-center fw-bold fst-italic justify-content-between" style="margin-left:12px;width:128px;height:32px;background:#a3a3a3;padding:0 10px;font-size:12.200px;border-radius:4px"><span>•#surface14066</span><svg width="10" height="6"><path d="M0 0h10L5 6z" fill="#444"/></svg></div>
   <span style="margin-left:3px">Keine Objekte ausgewählt. Klick, Umschalt+Klick, oder Ziehen um Objekte auszuwählen.</span>
  </div>
  <div class="vsep" style="height:34px;margin-top:2px"></div>
  <div class="mono flex-shrink-0" style="width:62px;line-height:17px;padding-top:1px;color:#1c1c1c"><div class="d-flex justify-content-between"><span>X:</span><span>-51,38</span></div><div class="d-flex justify-content-between"><span>Y:</span><span>1131.46</span></div></div>
  <div class="d-flex align-items-center flex-shrink-0" style="padding:6px 3px 0 9px"><span style="font-size:12.500px;width:15px">Z:</span><div class="spin d-flex align-items-center justify-content-between" style="width:51px;color:#222;padding-left:13px;font-size:12.500px">90<svg class="arr"><use href="#s-spin"/></svg></div></div>
 </footer>
</div>

<section class="win layers">
 <div class="wbar d-flex align-items-center justify-content-center">Ebenen (Umschalt+Strg+L)<svg class="wx" width="10" height="10"><use href="#s-x"/></svg></div>
 <div class="d-flex align-items-center" style="height:33px;padding-left:1px;padding-right:8px"><svg width="17" height="18"><use href="#s-layers"/></svg><span class="flex-grow-1" style="letter-spacing:0">Ebenen (Umschalt+Strg+L)</span>
  <button class="gbtn" style="width:28px;height:28px"><svg width="12" height="12"><rect x=".7" y=".7" width="10.600" height="10.600" rx="2" fill="none" stroke="#777"/><path d="M3.500 6l4-2.500v5z" fill="#777"/></svg></button>
  <svg width="12" height="12" style="margin:0 4px 0 11px"><rect x=".7" y=".7" width="10.600" height="10.600" rx="2" fill="none" stroke="#777"/><path d="M3.500 3.500l5 5M8.500 3.500l-5 5" stroke="#777" stroke-width="2"/></svg></div>
 <div style="margin:0 2px;height:645px;border:1px solid #d2d2d2">
  <div class="list" id="layers"></div>
  <div class="d-flex justify-content-end align-items-center" style="height:46px;padding-right:13px;gap:22px;margin-top:-2px">
   <svg width="20" height="24" fill="#999" stroke="#999"><use href="#l-top"/></svg><svg width="20" height="24" fill="#999" stroke="#999"><use href="#l-up"/></svg>
   <svg width="20" height="24" viewBox="0 0 20 24" fill="#999" stroke="#999"><g transform="rotate(180 10 12)"><use href="#l-up" width="20" height="24"/></g></svg><svg width="20" height="24" viewBox="0 0 20 24" fill="#999" stroke="#999"><g transform="rotate(180 10 12)"><use href="#l-top" width="20" height="24"/></g></svg></div>
  <div class="entry d-flex align-items-center justify-content-between" style="margin:3px 4px 0 70px;height:35px;padding:0 10px 0 42px;color:#999;border-color:#c4c4c4"><span>Normal</span><svg width="10" height="5"><path d="M0 0h10L5 5z" fill="#a5a5a5"/></svg></div>
  <div class="d-flex" style="margin:8px 2px 0 70px;height:36px"><div class="flex-grow-1" style="background:#e6e6e6;border-bottom:1px solid #c8c8c8;padding:4px 6px 0 0"><div class="sel text-end" style="height:27px;line-height:27px;padding-right:4px">100,0</div></div>
   <div class="bg-white d-flex align-items-center justify-content-center" style="width:22px;height:39px;margin-top:-2px"><svg width="9" height="27" viewBox="0 0 9 27"><path d="M0 5.500 4.500 1 9 5.500zM0 21.500 4.500 26 9 21.500z" fill="#b5b5b5"/></svg></div></div>
 </div>
</section>

<section class="win save">
 <div class="wbar d-flex align-items-center justify-content-center">Datei wählen, in die gespeichert werden soll<svg class="wx" width="10" height="10"><use href="#s-x"/></svg></div>
 <div class="d-flex align-items-center" style="padding:14px 14px 0 12px"><label style="width:147px">Name:</label><div class="entry flex-grow-1 d-flex align-items-center" style="padding:1px 0 0 8px;letter-spacing:.2px"><span class="sel">FMSD<span class="us">_</span>03</span>.svg</div></div>
 <div class="d-flex align-items-center" style="padding:16px 14px 0 12px"><label style="width:147px;letter-spacing:-.3px">In Ordner speichern:</label>
  <button class="gbtn" style="width:27px"><svg width="6" height="9"><path d="M6 0v9L0 4.500z" fill="#555"/></svg></button>
  <button class="gbtn" style="width:79px;margin-left:4px"><svg width="18" height="16" class="pe-1"><use href="#f-home" width="16"/></svg>martin</button>
  <button class="gbtn down" style="width:91px;margin-left:4px"><svg width="17" height="16"><use href="#f-desk" width="16"/></svg>&#8202;Desktop</button>
  <button class="gbtn ms-auto" style="width:118px">Ordner anlegen</button></div>
 <div class="d-flex" style="padding:26px 0 0 12px">
  <div class="frame d-flex flex-column" style="width:148px;height:250px">
   <div class="d-flex overflow-hidden" style="height:209px">
    <div style="width:130px;border-right:1px solid #dcdcdc" id="places"><div class="hd d-flex align-items-center" style="padding-left:6px">Orte</div></div>
    <div style="padding:4px 0 0 4px"><div class="thumbv" style="height:73px"></div></div>
   </div>
   <div class="d-flex align-items-center flex-grow-1" style="border-top:1px solid #d0d0d0;background:#fafafa;padding:0 0 2px 11px"><svg width="44" height="12"><path d="M0 6h11M5.500.5v11M33 6h10" stroke="#2a2a2a" stroke-width="1.300"/></svg></div>
  </div>
  <svg width="8" height="250"><g fill="#a5a5a5"><circle cx="4" cy="119" r="2"/><circle cx="4" cy="125" r="2"/><circle cx="4" cy="131" r="2"/></g></svg>
  <div class="frame d-flex overflow-hidden" style="width:437px;height:250px">
   <div style="width:419px;border-right:1px solid #dcdcdc" id="files">
    <div class="hd d-flex"><div class="d-flex align-items-center justify-content-between" style="width:216px;padding:0 10px 0 8px;border-right:1px solid #dcdcdc">Name<svg width="10" height="5"><path d="M0 0h10L5 5z" fill="#555"/></svg></div><div class="d-flex align-items-center" style="width:78px;padding-left:8px;border-right:1px solid #dcdcdc">Größe</div><div class="d-flex align-items-center text-nowrap" style="padding-left:8px">Letzte Änderung</div></div>
   </div>
   <div style="padding:4px 0 0 4px"><div class="thumbv" style="height:126px"></div></div>
  </div>
 </div>
 <div class="d-flex justify-content-between" style="padding:14px 14px 0 17px">
  <div style="padding-top:5px"><div class="d-flex align-items-center" style="height:18px"><input class="form-check-input chk" type="checkbox" checked><label style="padding-left:9px">Dateinamenserweiterung automatisch anhängen</label></div>
   <div class="d-flex align-items-center" style="height:18px;margin-top:14px"><input class="form-check-input chk" type="checkbox" checked><label style="padding-left:9px">Vorschau einschalten</label></div></div>
  <div class="entry" style="width:297px;height:60px;padding:4px"><div class="d-flex align-items-center justify-content-between" style="height:52px;border:2px solid #cacaca;border-radius:3px;padding:0 4px 0 2px"><span style="letter-spacing:0">Normales SVG (*.svg)</span><svg width="10" height="5"><path d="M0 0h10L5 5z" fill="#444"/></svg></div></div>
 </div>
 <div class="d-flex justify-content-end" style="padding:16px 14px 0;gap:10px"><button class="gbtn" style="width:95px;height:35px">Abbrechen</button><button class="gbtn" style="width:95px;height:35px">Speichern</button></div>
</section>

<script>
const $=id=>document.getElementById(id);
const ic=(n,s)=>`<svg width="${s}" height="${s}"><use href="#${n}"/></svg>`;
const us=t=>t.replace(/_/g,'<span class="us">_</span>');
$('tbox').innerHTML='arrow node tweak zoom ruler rect cube ell star spiral pencil pen call A spray eraser bucket grad mesh drop conn'.split(' ').map((n,i)=>
 `<div class="${i?'':'on'}"><span>${n=='A'?'<svg width="23" height="23"><text x="0" y="18" font-family="DejaVu Sans" font-weight="bold" font-size="20" textLength="18" lengthAdjust="spacingAndGlyphs" fill="#111">A</text><path d="M18 4h4M18 19h4M20 4v15" stroke="#222"/></svg>':ic('t-'+n,22)}</span></div>`).join('');
$('cmds').innerHTML='new open save print | imp exp | undo redo | copy cut paste | zsel zdraw zpage | dup clone unl | grp ungrp | fill T lay xml align | prop pref'.split(' ').map(n=>
 n=='|'?'<hr>':`<div>${n=='T'?'<svg width="22" height="24"><text x="2" y="20" font-family="DejaVu Serif" font-weight="bold" font-size="23" textLength="18" lengthAdjust="spacingAndGlyphs" fill="#111">T</text></svg>':n=='lay'?ic('s-layersd',21):ic('c-'+n,n=='pref'?22:24)}</div>`).join('');
$('snaps').innerHTML='*main | main b1 b2 b3 b4 | *main path int *cusp smo mid | *main obj rot A | pg *grid *guide'.split(' ').map(n=>{
 if(n=='|')return '<hr>';const on=n[0]=='*';n=n.replace('*','');
 return `<div class="${on?'on':''}"><span>${n=='A'?'<svg width="20" height="20"><path d="M2 17h16" stroke="#2c6b34" stroke-width="1.500"/><text x="4" y="16" font-family="DejaVu Sans" font-weight="bold" font-size="18" fill="#111">A</text><circle cx="3.500" cy="16.500" r="2.300" fill="#5d7d90" stroke="#156e22"/></svg>':ic('n-'+n,19)}</span></div>`}).join('');
const cols='#714700 #926b00 #b38d00 #b2b200 #b1b16b #b39a6e #b19046 #b06922 #b15436 #b02300 #6b0000 #252447 #00216b #00478f #005f9a #006bb3 #2b6c9c #6b8fb4 #7f9fb3 #9bb2b3 #b18bb0 #8f8fb3 #6b6bb2 #474792 #6b6b90 #47476b #004700 #006b00 #478f24 #6bb346 #8fac90'.split(' ');
$('pal').innerHTML='<i style="background:#adadad"><svg width="100%" height="16" viewBox="0 0 60 16" preserveAspectRatio="none" class="d-block"><path d="M0 0l60 16M60 0L0 16" stroke="#700" stroke-width="1.500"/></svg></i>'+cols.map(c=>`<i style="background:${c}"></i>`).join('')+'<svg class="position-absolute end-0" width="6" height="16"><path d="M5 3v10L1 8z" fill="#333"/></svg>';
$('layers').innerHTML=['decoration','excavation','drainage','stones','finds','trench_system'].map(t=>`<div class="lrow"><span style="width:32px;padding-left:6px" class="d-flex"><svg width="17" height="17"><use href="#s-eye"/></svg></span><span style="width:57px;padding-left:9px" class="d-flex"><svg width="14" height="18"><use href="#s-unlock"/></svg></span><span>${t}</span></div>`).join('');
$('places').innerHTML+=[['find','Suchen'],['rec','Zuletzt verw…'],0,['home','martin'],['desk','Desktop'],['disk','Dateisystem'],['net','martin@next…'],['disk','Datenträger']].map(r=>r?`<div class="rw" style="padding-left:4px;${r[1]=='Desktop'?'background:#c8dcf9':''}"><span class="d-flex" style="width:22px">${ic('f-'+r[0],16)}</span>${r[1]}</div>`:'<div style="height:1px;background:#dcdcdc;margin:0 2px 1px 2px"></div>').join('');
$('files').innerHTML+=['abm','Bchron','mega_karte','pdfs_to_read','r_buecher','recreate_review_pdf','rep_res_r','shape_axes'].map(t=>`<div class="rw" style="padding-left:4px"><span class="d-flex" style="width:22px">${ic('f-dir',16)}</span><span style="width:274px">${us(t)}</span><span class="date">${t=='mega_karte'?'03.05.2018':'05.04.2018'}</span></div>`).join('');

/* rulers */
let r='<path d="M61 120.500H1795M60.500 124V1147M61.500 112v8" stroke="#111"/>',p='';
for(let n=-14;n<=180;n++){const x=Math.round(187+n*8.953)-.5;if(x<62||x>1794)continue;
 const maj=n%10==0;p+=`M${x} ${maj?101:n%2==0?111:115.5}V120`;if(maj)r+=`<text x="${x+2}" y="110.500" letter-spacing="-.35">${n*10}</text>`}
for(let k=-5;k<=41;k++){const y=Math.round(245.5+k*22.4)-.5;if(y<123||y>1146)continue;const maj=k%10==0;
 p+=`M${maj?41:k%2==0?51:55} ${y}H60`;if(maj)String(1000-k*25).split('').forEach((c,j)=>r+=`<text x="41" y="${y+9.5+j*10}">${c}</text>`)}
$('ruler').innerHTML=r+`<path d="${p}" stroke="#111"/>`;

/* excavated ditches: centre line and width */
const D=[["M378 500Q400 485 425 496",24],["M400 500L392 545Q370 570 387 605 403 650 418 745",20],["M400 520Q425 560 450 570L512 580",20],["M392 560Q425 640 445 680 470 720 510 735 540 725 560 705",24],["M537 647Q550 685 567 705 640 740 655 775L678 830Q672 870 690 890 740 900 798 978",19],["M447 665Q470 760 460 815 440 855 400 872 350 885 325 895 280 920 245 962 205 1000 205 1050L209 1108",18],["M513 735L512 800Q505 860 520 892 570 897 650 897L690 885",26],["M515 885Q500 930 485 960 450 990 370 1025 320 1065 290 1075L255 1100",22],["M675 895Q690 950 682 1020L610 1058Q560 1040 540 1045 490 1090 420 1100 360 1115 340 1150 310 1200 270 1210 230 1220 200 1215 170 1205 155 1203",18],["M485 960Q530 1000 545 1045",24],["M490 950Q550 960 580 1000L640 1045",16],["M610 1058Q595 1150 598 1200 590 1285 560 1287L510 1287Q470 1230 466 1135",12],["M500 1090Q510 1160 540 1190 570 1220 580 1230",18],["M580 1220Q580 1265 560 1280",22],["M490 1100L530 1095",18],["M290 1230Q340 1250 380 1275L495 1303",14],["M228 1215V1240",20]];
$('ditch').innerHTML=D.map(d=>`<path d="${d[0]}" stroke="#777" stroke-width="${d[1]+3}"/>`).join('')+D.map(d=>`<path d="${d[0]}" stroke="#a1a1a1" stroke-width="${d[1]-1}"/>`).join('');

/* finds (triangles) and stones (rings) */
const T=`528 231 557 240 562 260 573 268 584 272 619 247 703 250 771 299 771 306 649 358 562 326 575 362 665 344 677 390 681 417 562 406 618 406 620 431 443 347 448 354 415 359 432 375 432 381 421 390 486 364 351 395 460 415 428 429 349 432 337 438 368 444 290 455 331 468 473 445 418 453 427 453 476 465 411 471 411 492 396 501 464 492 488 482 528 486 593 482 599 462 635 467 584 500 488 519 460 531 650 506 655 512 727 441 706 461 782 453 796 464 171 537 260 562 325 548 168 611 204 636 125 656 131 669 154 681 161 714 274 701 436 646 435 701 504 563 484 579 380 743 450 735 443 741 434 800 498 737 528 740 494 756 497 782 510 775 514 786 574 747 634 787 636 817 614 721 642 722 646 717 670 720 649 738 145 792 141 828 124 833 145 861 163 875 145 889 181 891 217 861 241 884 211 895 230 905 213 815 215 822 227 811 223 833 229 820 278 815 280 836 308 969 239 982 247 978 248 984 271 981 256 1032 216 1054 230 1041 329 1037 325 1074 308 1101 416 1028 536 971 613 1009 685 898 715 909 724 872 737 975 711 957 820 925 797 950 808 975 762 1027 769 1040 817 1035 722 1065 742 1085 781 1085 638 1063 643 1060 652 1122 643 1139 652 1154 689 1139 706 1143 706 1147 753 1157 815 1157 592 1208 692 1198 616 1247 890 844 927 847 915 882 918 890 932 915 901 990 911 1010 899 1022 911 1027 922 1108 878 1109 875 1114 873 1160 877 1166 918 1168 923 1164 898 1155 765 1215 763 1228 815 1215 821 1231 688 1238 697 1238 718 1238 727 1235 749 1230 776 1238 793 1245 838 1238 856 1238 866 1242 890 1232 898 1228 918 1223 930 1235 853 1260 885 1285 835 1286 849 1291 911 1284 650 1260 674 1281 610 1272 586 1305 593 1306 603 1322 629 1320 651 1312 601 1341 613 1338 643 1344 514 1323 539 1346 527 1361 565 1351 573 1360 580 1360 497 1427 734 1379 908 1392 918 1381 930 1309 867 1449 805 1474 808 1469 928 1508 237 1261 273 1263 278 1267 248 1294 178 1325 176 1346 264 1388 188 1393 190 1400 289 1398 283 1422 344 1449 619 1529 523 1552 539 1549 567 1568 577 1590 516 1598 552 1620 534 1636 640 1601 648 1612 724 1620 774 1581 870 1592 872 1609 859 1613 848 1632 825 1632 670 1658 740 1665 732 1681 675 1697 665 1713 713 1724 684 1727 622 1727 618 1712 578 1717 481 1674 469 1699 493 1728 516 1682 774 1732 794 1740 834 1733 838 1737 867 1727 928 1677 928 1794 761 1762 767 1765 784 1790 790 1795 667 1784 643 1760 612 1773 643 1818 559 1794 536 1821 571 1824 577 1852 482 1791 490 1798 463 1845 400 1789 416 1826 384 1748 335 1795 254 1676 244 1682 282 1710 250 1724 272 1848 327 1851 341 1862 346 1859 310 1889 316 1889 380 1872 391 1872 385 1906 445 1883 421 1929 433 1929 445 1936 421 1938 415 1942 430 1937 576 1903 590 1921 646 1927`;
const C=`480 284 487 287 499 281 520 287 492 306 502 301 519 301 519 308 476 337 482 335 441 339 404 387 393 388 344 382 243 377 319 458 552 303 628 299 636 294 673 314 687 313 699 319 791 389 796 519 780 548 780 557 799 616 816 622 687 519 588 420 561 458 591 456 591 464 581 482 593 491 548 491 556 489 556 495 580 510 589 517 579 518 513 389 510 395 497 402 505 410 494 412 500 420 419 559 421 581 306 571 517 618 531 616 499 664 522 664 513 672 308 660 314 681 622 691 684 688 806 702 285 688 254 695 274 703 247 711 259 714 283 713 295 703 225 725 233 730 278 730 259 717 351 748 338 770 322 775 400 775 380 846 274 763 251 775 262 775 274 774 286 770 228 771 217 777 220 790 197 806 295 788 281 801 289 796 304 801 310 809 297 819 308 826 316 834 240 819 247 823 253 826 260 827 318 860 560 850 566 842 425 927 540 913 291 997 382 982 394 992 392 1002 448 1025 476 1024 480 1020 200 1126 559 1125 680 1079 687 1081 560 1014 889 765 913 763 871 803 866 807 857 830 868 833 866 838 924 812 703 821 722 805 727 809 774 805 790 811 802 809 804 816 804 823 790 824 777 826 720 858 727 854 749 868 823 858 825 868 814 872 813 876 755 883 764 898 766 906 758 910 768 914 768 923 785 930 797 930 757 920 728 937 757 948 830 908 846 918 874 903 866 887 820 938 868 991 874 994 806 1008 816 1009 778 1012 793 1071 805 1070 799 1078 811 1078 804 1086 812 1084 914 1048 914 1055 914 1062 890 1120 900 1122 885 1130 895 1133 905 1135 887 1155 911 1140 830 1196 736 1251 876 1235 876 1246 278 1232 175 1275 168 1280 168 1295 153 1305 153 1312 162 1320 155 1328 155 1338 155 1347 203 1308 200 1331 223 1345 96 1316 115 1313 92 1340 99 1340 121 1346 127 1347 298 1302 168 1425 186 1433 737 1252 707 1272 711 1284 715 1288 704 1296 698 1309 731 1282 728 1304 775 1270 793 1278 827 1263 831 1271 811 1316 900 1287 897 1372 908 1374 925 1427 610 1400 619 1395 628 1401 691 1415 705 1443 764 1484 517 1529 402 1567 460 1583 467 1609 515 1576 528 1573 546 1594 515 1610 518 1616 505 1624 501 1648 522 1646 561 1636 571 1621 587 1632 582 1549 589 1551 604 1567 612 1569 667 1537 684 1540 669 1576 715 1589 688 1631 657 1621 625 1627 635 1640 627 1665 578 1664 586 1664 551 1671 560 1689 557 1698 690 1654 709 1652 725 1666 732 1670 738 1672 757 1626 830 1623 824 1665 856 1566 914 1665 848 1689 897 1702 800 1712 777 1679 720 1699 728 1723 735 1750 827 1736 827 1771 921 1766 638 1794 567 1750 471 1673 484 1688 461 1700 481 1717 474 1790 464 1778 367 1678 407 1679 299 1723 270 1831 380 1831 421 1817 451 1851 565 1830 563 1839 561 1847 593 1874 730 1841 646 1948 579 1952 367 1898 352 1911 372 1921 431 1898 436 1906 445 1906 467 1898 459 1917 477 1930 493 1940 508 1954 473 1952 500 1900 503 1908 501 1881 467 1872 475 1878 482 1872 477 1869 404 1938 360 1956 385 1955 439 1940`;
const pr=s=>{const a=s.trim().split(/\s+/).map(Number),o=[];for(let i=0;i<a.length;i+=2)o.push([a[i],a[i+1]]);return o};
$('dots').innerHTML=`<path fill="#141414" d="${pr(T).map(([x,y])=>`M${x-5} ${y-4.5}h10l-3.5 9h-3z`).join('')}"/><path fill="none" stroke="#4a4a4a" stroke-width="2" d="${pr(C).map(([x,y])=>`M${x-4} ${y}a4 4 0 1 0 8 0a4 4 0 1 0-8 0`).join('')}"/>`;
</script>
</body>
</html>
